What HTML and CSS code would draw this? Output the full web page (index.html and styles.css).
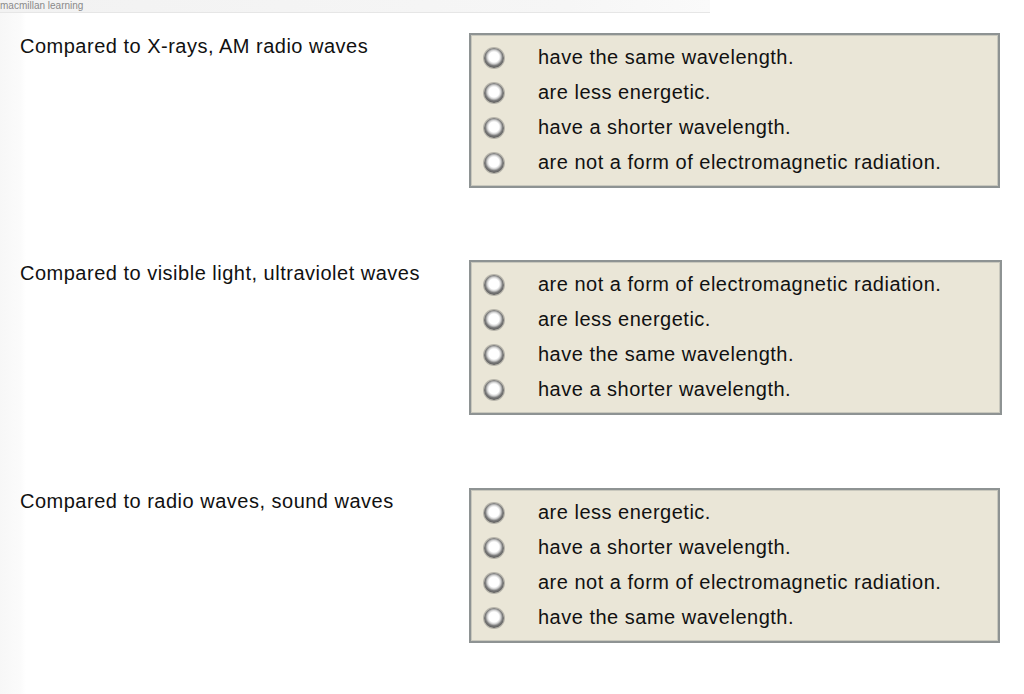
FILE: index.html
```html
<!DOCTYPE html>
<html lang="en">
<head>
    <meta charset="UTF-8">
    <title>Compare the waves</title>
    <link rel="stylesheet" href="styles.css">
</head>
<body>

    <!-- Top strip -->
    <div class="topbar"><span>macmillan learning</span></div>

    <main class="quiz">

        <section class="question">
            <p class="prompt">Compared to X-rays, AM radio waves</p>
            <div class="choices">
                <label class="choice"><span class="radio"></span>have the same wavelength.</label>
                <label class="choice"><span class="radio"></span>are less energetic.</label>
                <label class="choice"><span class="radio"></span>have a shorter wavelength.</label>
                <label class="choice"><span class="radio"></span>are not a form of electromagnetic radiation.</label>
            </div>
        </section>

        <section class="question second">
            <p class="prompt">Compared to visible light, ultraviolet waves</p>
            <div class="choices wide">
                <label class="choice"><span class="radio"></span>are not a form of electromagnetic radiation.</label>
                <label class="choice"><span class="radio"></span>are less energetic.</label>
                <label class="choice"><span class="radio"></span>have the same wavelength.</label>
                <label class="choice"><span class="radio"></span>have a shorter wavelength.</label>
            </div>
        </section>

        <section class="question">
            <p class="prompt">Compared to radio waves, sound waves</p>
            <div class="choices">
                <label class="choice"><span class="radio"></span>are less energetic.</label>
                <label class="choice"><span class="radio"></span>have a shorter wavelength.</label>
                <label class="choice"><span class="radio"></span>are not a form of electromagnetic radiation.</label>
                <label class="choice"><span class="radio"></span>have the same wavelength.</label>
            </div>
        </section>

    </main>

</body>
</html>
```

FILE: styles.css
```css
/* General */
* { margin: 0; padding: 0; box-sizing: border-box; }
body { font-family: "Liberation Sans", Arial, sans-serif; color: #111; background: #fff;
    background-image: linear-gradient(to right, #f7f7f7 0, #fbfbfb 20px, #fff 26px); min-height: 694px; }

/* Top strip */
.topbar { width: 710px; height: 13px; overflow: hidden;
    background: linear-gradient(to right, #f2f2f2, #f6f6f6 80%, #fafafa);
    border-bottom: 1px solid #e6e6e6; }
.topbar span { display: block; font-size: 10px; color: #8a8a8a; line-height: 11px; }

/* Questions */
.quiz { padding: 20px 0 0 20px; }
.question { display: grid; grid-template-columns: 449px 531px; margin-bottom: 73px; }
.question.second { margin-top: -1px; }
.prompt { font-size: 20px; line-height: 22px; letter-spacing: 0.5px; padding-top: 2px; }

/* Choice box */
.choices { background: #eae6d7; border: 2px solid #8e9393; box-shadow: inset 0 0 0 1px #c9c8bd;
    padding: 5px 0 6px 13px; }
.choices.wide { width: 533px; }
.choice { display: flex; align-items: center; height: 35px; font-size: 20px; letter-spacing: 0.5px; cursor: pointer; }
.radio { width: 20px; height: 20px; border-radius: 50%; margin-right: 34px; flex: none;
    background: radial-gradient(circle at 50% 45%, #fff 0, #fff 34%, #d0d0d0 46%, #7c7c7c 58%, #555 76%, #6f6f6f 100%);
    box-shadow: 0 0 0 1px rgba(90, 90, 90, 0.35); }
```
